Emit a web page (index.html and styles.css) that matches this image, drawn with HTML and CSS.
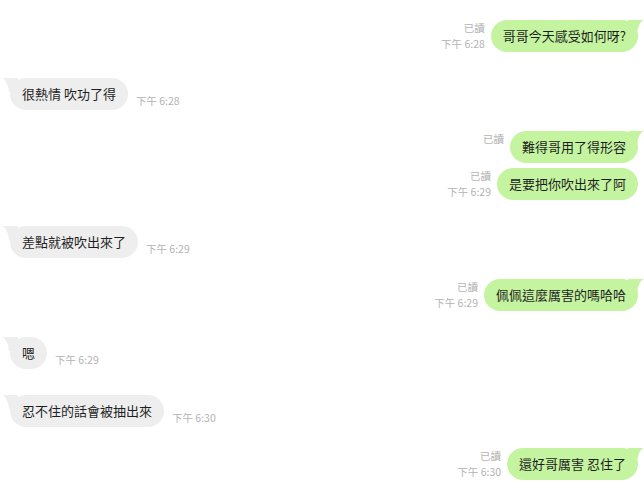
FILE: index.html
```html
<!DOCTYPE html>
<html lang="zh-Hant">
<head>
<meta charset="utf-8">
<link rel="stylesheet" href="styles.css">
</head>
<body>
<div class="chat">
  <div class="row out first">
    <div class="meta"><span>已讀</span><span>下午 6:28</span></div>
    <div class="bubble">哥哥今天感受如何呀?<svg class="tail" viewBox="0 0 16 14"><path d="M0 0H16C13 1 10 5 9 14H0Z"/></svg></div>
  </div>
  <div class="row in">
    <div class="bubble">很熱情 吹功了得<svg class="tail" viewBox="0 0 16 14"><path d="M16 0H0C3 1 6 5 7 14H16Z"/></svg></div>
    <div class="meta"><span>下午 6:28</span></div>
  </div>
  <div class="row out">
    <div class="meta"><span>已讀</span></div>
    <div class="bubble">難得哥用了得形容<svg class="tail" viewBox="0 0 16 14"><path d="M0 0H16C13 1 10 5 9 14H0Z"/></svg></div>
  </div>
  <div class="row out cont">
    <div class="meta"><span>已讀</span><span>下午 6:29</span></div>
    <div class="bubble">是要把你吹出來了阿</div>
  </div>
  <div class="row in">
    <div class="bubble">差點就被吹出來了<svg class="tail" viewBox="0 0 16 14"><path d="M16 0H0C3 1 6 5 7 14H16Z"/></svg></div>
    <div class="meta"><span>下午 6:29</span></div>
  </div>
  <div class="row out">
    <div class="meta"><span>已讀</span><span>下午 6:29</span></div>
    <div class="bubble">佩佩這麼厲害的嗎哈哈<svg class="tail" viewBox="0 0 16 14"><path d="M0 0H16C13 1 10 5 9 14H0Z"/></svg></div>
  </div>
  <div class="row in">
    <div class="bubble">嗯<svg class="tail" viewBox="0 0 16 14"><path d="M16 0H0C3 1 6 5 7 14H16Z"/></svg></div>
    <div class="meta"><span>下午 6:29</span></div>
  </div>
  <div class="row in">
    <div class="bubble">忍不住的話會被抽出來<svg class="tail" viewBox="0 0 16 14"><path d="M16 0H0C3 1 6 5 7 14H16Z"/></svg></div>
    <div class="meta"><span>下午 6:30</span></div>
  </div>
  <div class="row out">
    <div class="meta"><span>已讀</span><span>下午 6:30</span></div>
    <div class="bubble">還好哥厲害 忍住了<svg class="tail" viewBox="0 0 16 14"><path d="M0 0H16C13 1 10 5 9 14H0Z"/></svg></div>
  </div>
</div>
</body>
</html>
```
FILE: styles.css
```css
html, body {
  margin: 0;
  padding: 0;
  background: #ffffff;
}
body {
  font-family: "Noto Sans CJK TC", "Noto Sans", sans-serif;
}
.chat {
  display: flex;
  flex-direction: column;
  padding-top: 20px;
}
.row {
  display: flex;
  align-items: flex-start;
}
.row.in {
  margin-top: 26px;
  padding-left: 10px;
  justify-content: flex-start;
  align-items: flex-end;
}
.row.out {
  margin-top: 21px;
  padding-right: 6px;
  justify-content: flex-end;
}
.row.out.first {
  margin-top: 0;
}
.row.out.cont {
  margin-top: 5px;
}
.bubble {
  position: relative;
  height: 32px;
  line-height: 32px;
  padding: 0 12px;
  border-radius: 16px;
  font-size: 13px;
  color: #1e1e1e;
  white-space: nowrap;
}
.row.out .bubble {
  background: #c4f4a0;
}
.row.in .bubble {
  background: #eeeeee;
}
.tail {
  position: absolute;
  top: 0;
  width: 16px;
  height: 14px;
}
.row.out .tail {
  right: -6px;
  fill: #c4f4a0;
}
.row.in .tail {
  left: -8px;
  fill: #eeeeee;
}
.meta {
  display: flex;
  flex-direction: column;
  font-size: 10.5px;
  line-height: 16px;
  color: #b4b4b4;
  white-space: nowrap;
}
.row.out .meta {
  align-items: flex-end;
  margin-right: 6px;
}
.row.in .meta {
  margin-left: 8px;
  padding-bottom: 1px;
}
```
